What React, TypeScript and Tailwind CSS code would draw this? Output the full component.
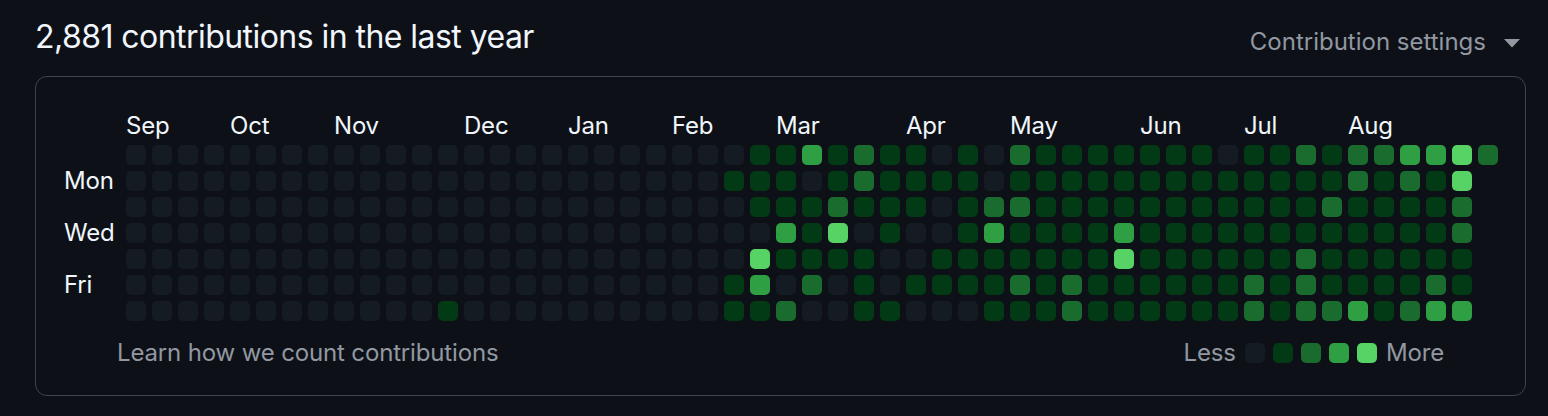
import React from "react";

// contribution levels per week column (Sun..Sat)
const COLORS = ["bg-[#151b23]", "bg-[#033a16]", "bg-[#196c2e]", "bg-[#2ea043]", "bg-[#56d364]"];

const active: number[][] = [
  [0, 1, 0, 0, 0, 1, 1], // 23
  [1, 1, 1, 0, 4, 3, 1],
  [1, 1, 1, 3, 1, 0, 2],
  [3, 0, 1, 1, 1, 2, 0],
  [1, 1, 2, 4, 1, 0, 0],
  [2, 2, 1, 0, 1, 1, 1],
  [1, 1, 1, 1, 0, 0, 1],
  [1, 1, 1, 0, 0, 1, 0], // 30
  [0, 1, 0, 0, 1, 1, 0],
  [1, 1, 1, 1, 1, 1, 0],
  [0, 0, 2, 3, 1, 1, 1],
  [2, 1, 2, 1, 1, 2, 1],
  [1, 1, 1, 1, 1, 1, 1],
  [1, 1, 1, 1, 1, 2, 2],
  [1, 1, 1, 1, 1, 1, 1],
  [1, 1, 1, 3, 4, 1, 1],
  [1, 1, 1, 1, 1, 1, 1],
  [1, 1, 1, 1, 1, 1, 1], // 40
  [1, 1, 1, 1, 1, 1, 1],
  [0, 1, 1, 1, 1, 1, 1],
  [1, 1, 1, 1, 1, 2, 2],
  [1, 1, 1, 1, 1, 1, 1],
  [2, 1, 1, 1, 2, 2, 2],
  [1, 1, 2, 1, 1, 1, 2],
  [2, 2, 1, 1, 1, 1, 3],
  [2, 1, 1, 1, 1, 1, 1],
  [3, 2, 1, 1, 1, 1, 2],
  [3, 1, 1, 1, 1, 2, 3], // 50
  [4, 4, 2, 2, 1, 1, 3],
  [2],
];

const weeks: number[][] = Array.from({ length: 53 }, (_, i) => {
  if (i >= 23) return active[i - 23];
  const col = [0, 0, 0, 0, 0, 0, 0];
  if (i === 12) col[6] = 1;
  return col;
});

const months: Record<number, string> = {
  0: "Sep",
  4: "Oct",
  8: "Nov",
  13: "Dec",
  17: "Jan",
  21: "Feb",
  25: "Mar",
  30: "Apr",
  34: "May",
  39: "Jun",
  43: "Jul",
  47: "Aug",
};

const days = ["", "Mon", "", "Wed", "", "Fri", ""];

export default function App() {
  return (
    <div className="w-[1548px] h-[416px] bg-[#0d1117] pl-[35px] pr-[22px] font-['Inter','Liberation_Sans',sans-serif] overflow-hidden">
      {/* Header */}
      <div className="h-[76px] flex items-start justify-between">
        <h2 className="mt-[13px] text-[32px] leading-[48px] font-normal text-[#f0f6fc] tracking-[-0.55px]">
          2,881 contributions in the last year
        </h2>
        <button className="mt-[24px] flex items-center gap-[18px] text-[24px] leading-[36px] text-[#9198a1]">
          Contribution settings
          <svg width="16" height="9" viewBox="0 0 16 9" className="mt-[2px] mr-[6px]">
            <path d="M0 0h16L8 8.5z" fill="#9198a1" />
          </svg>
        </button>
      </div>

      {/* Graph box */}
      <div className="h-[320px] border border-[#3d444d] rounded-[12px] pt-[34px] pb-[27px]">
        <div className="flex pl-[28px]">
          {/* Day labels */}
          <div className="w-[62px] pt-[34px] flex flex-col gap-[6px]">
            {days.map((d, i) => (
              <div key={i} className="h-[20px] text-[24px] leading-[20px] text-[#f0f6fc] whitespace-nowrap tracking-[-0.2px]">
                {d}
              </div>
            ))}
          </div>

          <div className="flex flex-col gap-[4px]">
            {/* Month labels */}
            <div className="flex gap-[6px] h-[30px]">
              {weeks.map((_, i) => (
                <div key={i} className="w-[20px] text-[24px] leading-[30px] text-[#f0f6fc] whitespace-nowrap tracking-[-0.2px]">
                  {months[i] ?? ""}
                </div>
              ))}
            </div>

            {/* Cells */}
            <div className="flex gap-[6px]">
              {weeks.map((col, i) => (
                <div key={i} className="flex flex-col gap-[6px]">
                  {col.map((lvl, j) => (
                    <div key={j} className={`w-[20px] h-[20px] rounded-[5px] ${COLORS[lvl]}`} />
                  ))}
                </div>
              ))}
            </div>
          </div>
        </div>

        {/* Footer */}
        <div className="mt-[17px] px-[81px] flex items-center justify-between text-[24px] leading-[30px] text-[#9198a1] tracking-[-0.15px]">
          <a href="#" className="hover:text-[#4493f8]">Learn how we count contributions</a>
          <div className="flex items-center">
            <span className="mr-[9px]">Less</span>
            <div className="flex gap-[8px]">
              {COLORS.map((c, i) => (
                <div key={i} className={`w-[20px] h-[20px] rounded-[5px] ${c}`} />
              ))}
            </div>
            <span className="ml-[9px]">More</span>
          </div>
        </div>
      </div>
    </div>
  );
}
